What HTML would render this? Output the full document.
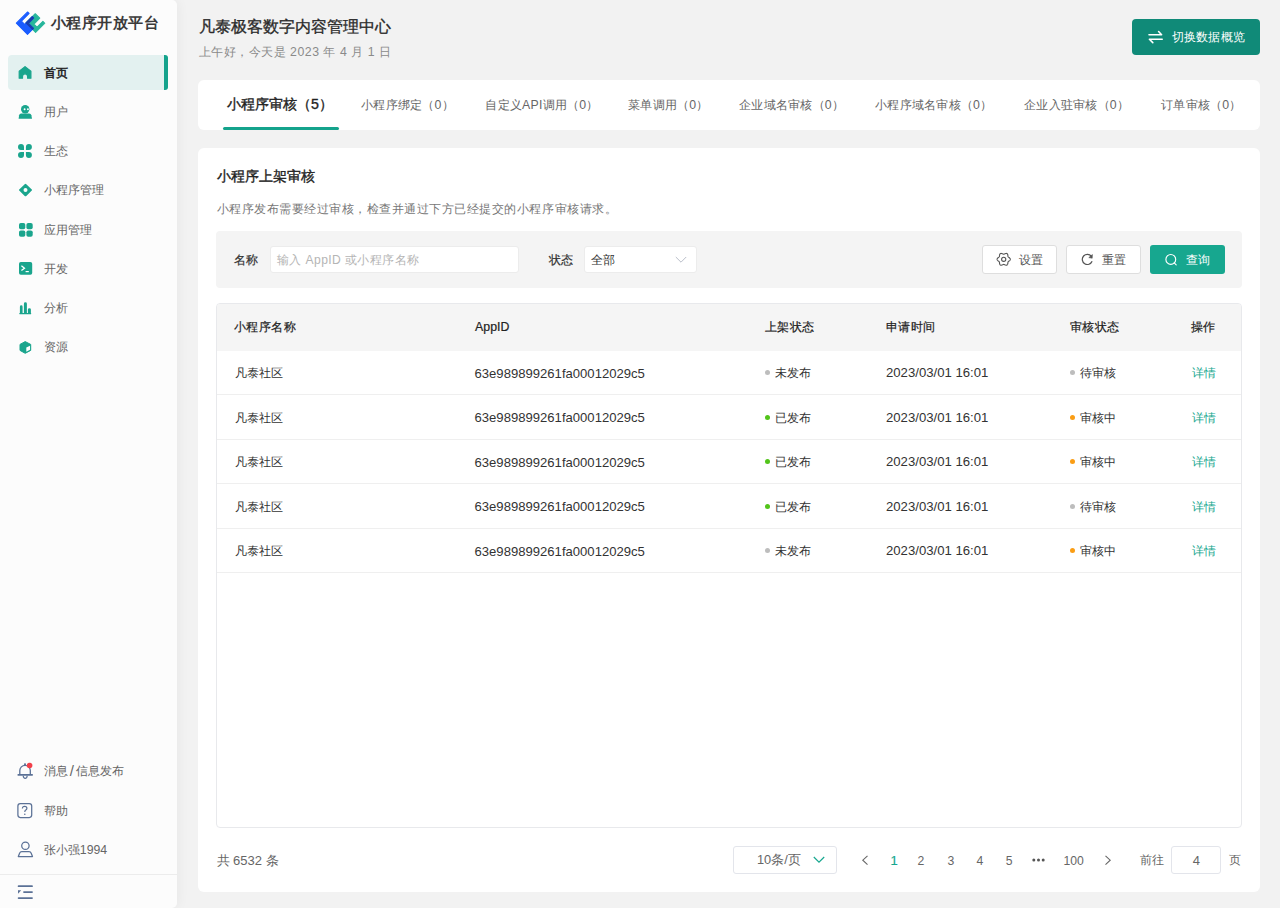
<!DOCTYPE html>
<html><head><meta charset="utf-8">
<style>
*{box-sizing:border-box;margin:0;padding:0}
html,body{width:1280px;height:908px;overflow:hidden}
body{background:#f2f2f2;font-family:"Liberation Sans",sans-serif;position:relative}
.a{position:absolute}
.t{position:absolute;white-space:nowrap;height:20px;line-height:20px}
</style></head><body>
<div class="a" style="left:0;top:0;width:177px;height:908px;background:#fcfcfc;border-radius:0 5px 5px 0;box-shadow:2px 0 12px rgba(0,0,0,0.045)"></div>
<svg class="a" style="left:0px;top:0px" width="50" height="40" viewBox="0 0 50 40"><g transform="matrix(0.5 0.5 0.5 -0.5 0 0)" stroke-width="1.4" stroke-linejoin="round">
<polygon fill="#27b69b" stroke="#27b69b" points="48.9,3.1 68.1,3.1 68.1,21.6 64.2,21.6 64.2,9.9 58.0,9.9 58.0,21.6 48.9,21.6"/>
<polygon fill="#1a5cff" stroke="#1a5cff" points="39.5,-6.9 61.9,-6.9 61.9,5.1 51.7,5.1 51.7,15.7 48.9,15.7 48.9,0.3 42.6,0.3 42.6,15.7 39.5,15.7"/>
<polygon fill="#1a3fae" stroke="#1a3fae" points="48.9,3.1 61.9,3.1 61.9,5.1 51.7,5.1 51.7,15.7 48.9,15.7"/>
</g></svg>
<div class="t" style="left:50.5px;top:12.60px;font-size:15px;color:#3a3a3a;font-weight:bold;letter-spacing:0.5px">小程序开放平台</div>
<div class="a" style="left:8px;top:55px;width:160px;height:35px;background:#e3f1f0;border-radius:4px"></div>
<div class="a" style="left:164px;top:55px;width:4px;height:35px;background:#14a38c;border-radius:0 3px 3px 0"></div>
<div class="t" style="left:43.5px;top:62.90px;font-size:12.3px;color:#222;-webkit-text-stroke:0.5px #222">首页</div>
<div class="t" style="left:43.5px;top:101.60px;font-size:12.3px;color:#666;">用户</div>
<div class="t" style="left:43.5px;top:141.30px;font-size:12.3px;color:#666;">生态</div>
<div class="t" style="left:43.5px;top:180.10px;font-size:12.3px;color:#666;">小程序管理</div>
<div class="t" style="left:43.5px;top:219.50px;font-size:12.3px;color:#666;">应用管理</div>
<div class="t" style="left:43.5px;top:258.60px;font-size:12.3px;color:#666;">开发</div>
<div class="t" style="left:43.5px;top:298.30px;font-size:12.3px;color:#666;">分析</div>
<div class="t" style="left:43.5px;top:336.90px;font-size:12.3px;color:#666;">资源</div>
<svg class="a" style="left:18px;top:66px" width="14" height="14" viewBox="0 0 14 14"><path fill="#1aa58d" stroke="#1aa58d" stroke-width="1.2" stroke-linejoin="round" d="M7.05 0.6 L12.9 5.2 V12.2 H9.6 V10.4 A2.55 2.55 0 0 0 4.5 10.4 V12.2 H1.2 V5.2 Z"/></svg>
<svg class="a" style="left:18px;top:105px" width="14" height="14" viewBox="0 0 14 14"><circle cx="7.2" cy="4.2" r="4.2" fill="#1aa58d"/><circle cx="6.6" cy="4.2" r="0.95" fill="#fff"/><circle cx="9.9" cy="4.2" r="0.95" fill="#fff"/><path fill="#1aa58d" d="M3.2 8.5 H11.2 Q13 8.5 13.4 10.3 L14 13.8 H0.6 L1.1 10.3 Q1.4 8.5 3.2 8.5Z"/></svg>
<svg class="a" style="left:18px;top:144px" width="14" height="14" viewBox="0 0 14 14"><path fill="#1aa58d" d="M6 6 H3 A3 3 0 1 1 6 3Z M7.9 6 V3 A3 3 0 1 1 10.9 6Z M6 7.9 V10.9 A3 3 0 1 1 3 7.9Z M7.9 7.9 H10.9 A3 3 0 1 1 7.9 10.9Z"/></svg>
<svg class="a" style="left:18px;top:183px" width="15" height="15" viewBox="0 0 15 15"><path fill="#1aa58d" fill-rule="evenodd" d="M7.5 0.8 Q7.9 0.8 8.3 1.2 L13.8 6.6 Q14.3 7.1 13.8 7.6 L8.3 13 Q7.5 13.7 6.7 13 L1.2 7.6 Q0.7 7.1 1.2 6.6 L6.7 1.2 Q7.1 0.8 7.5 0.8Z M7.5 5.1 A2 2 0 1 0 7.5 9.1 A2 2 0 1 0 7.5 5.1Z"/></svg>
<svg class="a" style="left:19px;top:223px" width="14" height="14" viewBox="0 0 14 14"><rect x="0" y="0" width="6.3" height="6.3" rx="1.8" fill="#1aa58d"/><rect x="0" y="7.4" width="6.3" height="6.3" rx="1.8" fill="#1aa58d"/><rect x="7.4" y="0" width="6.3" height="6.3" rx="1.8" fill="#1aa58d"/><rect x="7.4" y="7.4" width="6.3" height="6.3" rx="1.8" fill="#1aa58d"/></svg>
<svg class="a" style="left:19px;top:262px" width="14" height="14" viewBox="0 0 14 14"><rect x="0" y="0" width="13.2" height="12.8" rx="1.8" fill="#1aa58d"/><path d="M2.4 3.8 L5.5 6.2 L2.4 8.6" stroke="#fff" stroke-width="1.3" fill="none"/><rect x="6.6" y="9" width="3.2" height="1.2" fill="#fff"/></svg>
<svg class="a" style="left:19px;top:302px" width="14" height="14" viewBox="0 0 14 14"><path fill="#1aa58d" d="M0.9 4.7 Q0.9 3.3 2.25 3.3 Q3.6 3.3 3.6 4.7 V11.4 H0.9Z M4.9 1.7 Q4.9 0.3 6.4 0.3 Q7.9 0.3 7.9 1.7 V11.4 H4.9Z M8.9 7.6 Q8.9 6.2 10.4 6.2 Q11.9 6.2 11.9 7.6 V11.4 H8.9Z"/><rect x="0.3" y="10.9" width="11.9" height="1.3" rx="0.4" fill="#1aa58d"/></svg>
<svg class="a" style="left:19px;top:341px" width="14" height="14" viewBox="0 0 14 14"><path fill="#1aa58d" stroke="#1aa58d" stroke-width="1" stroke-linejoin="round" d="M6.2 0.6 L11.7 3.4 V9.4 L6.2 12.3 L1 9.4 V3.4Z"/><path fill="#fff" d="M7.3 6.6 L11 4.7 V8.7 L7.3 10.7Z"/></svg>
<div class="t" style="left:43.8px;top:761.20px;font-size:12.3px;color:#666;">消息<span style="padding:0 1.9px;font-size:15px;vertical-align:-1px">/</span>信息发布</div>
<div class="t" style="left:43.8px;top:800.60px;font-size:12.3px;color:#666;">帮助</div>
<div class="t" style="left:43.8px;top:839.70px;font-size:12.3px;color:#666;">张小强1994</div>
<svg class="a" style="left:17px;top:762px" width="17" height="18" viewBox="0 0 17 18"><path d="M2.8 12.9 V8.6 A5.25 5.25 0 0 1 13.3 8.6 V12.9" fill="none" stroke="#5b7196" stroke-width="1.3"/><path d="M1.2 12.9 H15.2" stroke="#5b7196" stroke-width="1.6" stroke-linecap="round"/><circle cx="8" cy="2.3" r="1.1" fill="#5b7196"/><path d="M6.2 13.8 Q6.4 16.4 8.2 16.4 Q10 16.4 10.2 13.8" fill="none" stroke="#5b7196" stroke-width="1.2"/><circle cx="12.6" cy="3.5" r="2.8" fill="#f2404a"/></svg>
<svg class="a" style="left:16px;top:802px" width="17" height="17" viewBox="0 0 17 17"><rect x="1.9" y="1.6" width="13.8" height="13.9" rx="2.4" fill="none" stroke="#5b7196" stroke-width="1.25"/><path d="M6.4 6.6 Q6.4 4.3 8.7 4.3 Q10.9 4.3 10.9 6.3 Q10.9 7.6 9.5 8.3 Q8.8 8.7 8.8 10.1" fill="none" stroke="#5b7196" stroke-width="1.2"/><circle cx="8.8" cy="12.3" r="0.8" fill="#5b7196"/></svg>
<svg class="a" style="left:17px;top:841px" width="17" height="18" viewBox="0 0 17 18"><circle cx="8.4" cy="4.7" r="3.7" fill="none" stroke="#5b7196" stroke-width="1.25"/><path d="M1.3 15.5 L2.6 12.2 Q3.2 10.6 4.8 10.6 H12 Q13.6 10.6 14.2 12.2 L15.5 15.5 Z" fill="none" stroke="#5b7196" stroke-width="1.25" stroke-linejoin="round"/></svg>
<div class="a" style="left:0px;top:874px;width:177px;height:1px;background:#ececec;"></div>
<svg class="a" style="left:17px;top:885px" width="17" height="15" viewBox="0 0 17 15"><rect x="0.7" y="0.3" width="15.2" height="1.8" rx="0.9" fill="#5b7196"/><rect x="6.1" y="6.2" width="9.8" height="1.8" rx="0.9" fill="#5b7196"/><rect x="0.7" y="12.2" width="15.2" height="1.8" rx="0.9" fill="#5b7196"/><path d="M1 5.2 L4.2 5.2 L1 8.8Z" fill="#5b7196"/></svg>
<div class="t" style="left:198.5px;top:16.90px;font-size:15.8px;color:#2a2a2a;-webkit-text-stroke:0.32px #2a2a2a">凡泰极客数字内容管理中心</div>
<div class="t" style="left:198.5px;top:42.30px;font-size:12.3px;color:#8a8a8a;letter-spacing:0.52px">上午好，今天是 2023 年 4 月 1 日</div>
<div class="a" style="left:1132px;top:19px;width:128px;height:36px;background:#108a78;border-radius:4px"></div>
<svg class="a" style="left:1148px;top:30px" width="16" height="14" viewBox="0 0 16 14"><path d="M1 4.7 H13.6 L10.6 1.5 M14.2 9.2 H1.4 L4.8 12.6" fill="none" stroke="#fff" stroke-width="1.6" stroke-linejoin="round" stroke-linecap="round"/></svg>
<div class="t" style="left:1171.5px;top:27.20px;font-size:11.8px;color:#fff;letter-spacing:0.3px">切换数据概览</div>
<div class="a" style="left:198px;top:80px;width:1062px;height:50px;background:#fff;border-radius:6px"></div>
<div class="t" style="left:227px;top:94.40px;font-size:14.2px;color:#222;-webkit-text-stroke:0.35px #222;">小程序审核（5）</div>
<div class="a" style="left:223px;top:127px;width:116px;height:3px;background:#14a38c;border-radius:2px"></div>
<div class="t" style="left:361px;top:94.90px;font-size:12.3px;color:#666;letter-spacing:0.25px">小程序绑定（0）</div>
<div class="t" style="left:485.3px;top:94.90px;font-size:12.3px;color:#666;letter-spacing:0.25px">自定义API调用（0）</div>
<div class="t" style="left:628.1px;top:94.90px;font-size:12.3px;color:#666;letter-spacing:0.25px">菜单调用（0）</div>
<div class="t" style="left:739px;top:94.90px;font-size:12.3px;color:#666;letter-spacing:0.25px">企业域名审核（0）</div>
<div class="t" style="left:875px;top:94.90px;font-size:12.3px;color:#666;letter-spacing:0.25px">小程序域名审核（0）</div>
<div class="t" style="left:1024px;top:94.90px;font-size:12.3px;color:#666;letter-spacing:0.25px">企业入驻审核（0）</div>
<div class="t" style="left:1161px;top:94.90px;font-size:12.3px;color:#666;letter-spacing:0.25px">订单审核（0）</div>
<div class="a" style="left:198px;top:148px;width:1062px;height:744px;background:#fff;border-radius:6px"></div>
<div class="t" style="left:216.5px;top:166.00px;font-size:14.2px;color:#222;-webkit-text-stroke:0.35px #222;">小程序上架审核</div>
<div class="t" style="left:216.5px;top:199.00px;font-size:12.05px;color:#777;letter-spacing:0.52px">小程序发布需要经过审核，检查并通过下方已经提交的小程序审核请求。</div>
<div class="a" style="left:216px;top:231px;width:1026px;height:57px;background:#f4f4f4;border-radius:4px"></div>
<div class="t" style="left:234px;top:250.00px;font-size:12.3px;color:#333;-webkit-text-stroke:0.2px #333;">名称</div>
<div class="a" style="left:270px;top:246px;width:249px;height:27px;background:#fff;border:1px solid #ececec;border-radius:3px;box-sizing:border-box"></div>
<div class="t" style="left:277px;top:249.80px;font-size:12.1px;color:#b5b5b5;letter-spacing:0.4px">输入 AppID 或小程序名称</div>
<div class="t" style="left:548.8px;top:249.60px;font-size:12.3px;color:#333;-webkit-text-stroke:0.2px #333;">状态</div>
<div class="a" style="left:584px;top:246px;width:113px;height:27px;background:#fff;border:1px solid #ececec;border-radius:3px;box-sizing:border-box"></div>
<div class="t" style="left:590.5px;top:250.00px;font-size:12.3px;color:#333;">全部</div>
<svg class="a" style="left:675px;top:256px" width="12" height="8" viewBox="0 0 12 8"><path d="M0.8 1 L6 6.2 L11.2 1" fill="none" stroke="#b9bec9" stroke-width="1"/></svg>
<div class="a" style="left:982px;top:245px;width:75px;height:29px;background:#fff;border:1px solid #dedede;border-radius:3px;box-sizing:border-box"></div>
<svg class="a" style="left:995px;top:252px" width="17" height="15" viewBox="0 0 17 15"><path d="M15.30 7.30 L15.25 6.96 L15.12 6.63 L14.91 6.32 L14.65 6.04 L14.35 5.79 L14.04 5.56 L13.75 5.36 L13.49 5.17 L13.28 4.97 L13.12 4.75 L13.01 4.50 L12.94 4.22 L12.90 3.90 L12.88 3.54 L12.84 3.16 L12.77 2.78 L12.66 2.41 L12.50 2.08 L12.27 1.80 L12.00 1.58 L11.68 1.45 L11.33 1.40 L10.95 1.43 L10.58 1.52 L10.21 1.65 L9.87 1.80 L9.55 1.96 L9.25 2.09 L8.97 2.17 L8.70 2.20 L8.43 2.17 L8.15 2.09 L7.85 1.96 L7.53 1.80 L7.19 1.65 L6.82 1.52 L6.45 1.43 L6.07 1.40 L5.72 1.45 L5.40 1.58 L5.13 1.80 L4.90 2.08 L4.74 2.41 L4.63 2.78 L4.56 3.16 L4.52 3.54 L4.50 3.90 L4.46 4.22 L4.39 4.50 L4.28 4.75 L4.12 4.97 L3.91 5.17 L3.65 5.36 L3.36 5.56 L3.05 5.79 L2.75 6.04 L2.49 6.32 L2.28 6.63 L2.15 6.96 L2.10 7.30 L2.15 7.64 L2.28 7.97 L2.49 8.28 L2.75 8.56 L3.05 8.81 L3.36 9.04 L3.65 9.24 L3.91 9.43 L4.12 9.63 L4.28 9.85 L4.39 10.10 L4.46 10.38 L4.50 10.70 L4.52 11.06 L4.56 11.44 L4.63 11.82 L4.74 12.19 L4.90 12.52 L5.13 12.80 L5.40 13.02 L5.72 13.15 L6.07 13.20 L6.45 13.17 L6.82 13.08 L7.19 12.95 L7.53 12.80 L7.85 12.64 L8.15 12.51 L8.43 12.43 L8.70 12.40 L8.97 12.43 L9.25 12.51 L9.55 12.64 L9.87 12.80 L10.21 12.95 L10.58 13.08 L10.95 13.17 L11.33 13.20 L11.68 13.15 L12.00 13.02 L12.27 12.80 L12.50 12.52 L12.66 12.19 L12.77 11.82 L12.84 11.44 L12.88 11.06 L12.90 10.70 L12.94 10.38 L13.01 10.10 L13.12 9.85 L13.28 9.63 L13.49 9.43 L13.75 9.24 L14.04 9.04 L14.35 8.81 L14.65 8.56 L14.91 8.28 L15.12 7.97 L15.25 7.64 L15.30 7.30Z" fill="none" stroke="#555" stroke-width="1.1" stroke-linejoin="round"/><circle cx="8.7" cy="7.3" r="2.1" fill="none" stroke="#555" stroke-width="1.1"/></svg>
<div class="t" style="left:1019px;top:250.00px;font-size:12.3px;color:#555;">设置</div>
<div class="a" style="left:1066px;top:245px;width:75px;height:29px;background:#fff;border:1px solid #dedede;border-radius:3px;box-sizing:border-box"></div>
<svg class="a" style="left:1080px;top:252px" width="15" height="15" viewBox="0 0 15 15"><path d="M12.13 9.31 A5.1 5.1 0 1 1 11.42 4.26" fill="none" stroke="#555" stroke-width="1.2"/><path d="M12.4 2.6 L12.2 6.2 L8.8 5.6Z" fill="#555" stroke="#555" stroke-width="0.6" stroke-linejoin="round"/></svg>
<div class="t" style="left:1102px;top:250.00px;font-size:12.3px;color:#555;">重置</div>
<div class="a" style="left:1150px;top:245px;width:75px;height:29px;background:#17a78f;border-radius:3px"></div>
<svg class="a" style="left:1164px;top:252px" width="15" height="15" viewBox="0 0 15 15"><circle cx="6.8" cy="7.4" r="4.9" fill="none" stroke="#fff" stroke-width="1.15"/><path d="M10.2 10.8 L12.2 12.8" stroke="#fff" stroke-width="1.15" stroke-linecap="round"/></svg>
<div class="t" style="left:1185.5px;top:250.00px;font-size:12.3px;color:#fff;">查询</div>
<div class="a" style="left:216px;top:303px;width:1026px;height:525px;border:1px solid #e8e9ec;border-radius:4px;overflow:hidden;box-sizing:border-box"><div style="height:47px;background:#f5f5f5"></div></div>
<div class="t" style="left:234px;top:317.10px;font-size:12.3px;color:#222;-webkit-text-stroke:0.2px #222;letter-spacing:0.4px">小程序名称</div>
<div class="t" style="left:475.1px;top:317.00px;font-size:12.3px;color:#222;-webkit-text-stroke:0.2px #222;">AppID</div>
<div class="t" style="left:765px;top:317.10px;font-size:12.3px;color:#222;-webkit-text-stroke:0.2px #222;letter-spacing:0.4px">上架状态</div>
<div class="t" style="left:886px;top:317.10px;font-size:12.3px;color:#222;-webkit-text-stroke:0.2px #222;letter-spacing:0.4px">申请时间</div>
<div class="t" style="left:1070px;top:317.10px;font-size:12.3px;color:#222;-webkit-text-stroke:0.2px #222;letter-spacing:0.4px">审核状态</div>
<div class="t" style="left:1191px;top:317.10px;font-size:12.3px;color:#222;-webkit-text-stroke:0.2px #222;letter-spacing:0.4px">操作</div>
<div class="t" style="left:234.5px;top:363.10px;font-size:12.3px;color:#333;">凡泰社区</div>
<div class="t" style="left:474.5px;top:363.60px;font-size:13.1px;color:#333;">63e989899261fa00012029c5</div>
<div class="a" style="left:765px;top:370.40000000000003px;width:5px;height:5px;background:#bdbdbd;border-radius:50%"></div>
<div class="t" style="left:775px;top:363.10px;font-size:12.3px;color:#333;">未发布</div>
<div class="t" style="left:886px;top:363.10px;font-size:13.15px;color:#333;">2023/03/01 16:01</div>
<div class="a" style="left:1070px;top:370.40000000000003px;width:5px;height:5px;background:#bdbdbd;border-radius:50%"></div>
<div class="t" style="left:1080px;top:363.10px;font-size:12.3px;color:#333;">待审核</div>
<div class="t" style="left:1191.5px;top:363.10px;font-size:12.3px;color:#17a78f;">详情</div>
<div class="a" style="left:217px;top:394px;width:1024px;height:1px;background:#efefef;"></div>
<div class="t" style="left:234.5px;top:407.60px;font-size:12.3px;color:#333;">凡泰社区</div>
<div class="t" style="left:474.5px;top:408.10px;font-size:13.1px;color:#333;">63e989899261fa00012029c5</div>
<div class="a" style="left:765px;top:414.90000000000003px;width:5px;height:5px;background:#52c41a;border-radius:50%"></div>
<div class="t" style="left:775px;top:407.60px;font-size:12.3px;color:#333;">已发布</div>
<div class="t" style="left:886px;top:407.60px;font-size:13.15px;color:#333;">2023/03/01 16:01</div>
<div class="a" style="left:1070px;top:414.90000000000003px;width:5px;height:5px;background:#fa9d14;border-radius:50%"></div>
<div class="t" style="left:1080px;top:407.60px;font-size:12.3px;color:#333;">审核中</div>
<div class="t" style="left:1191.5px;top:407.60px;font-size:12.3px;color:#17a78f;">详情</div>
<div class="a" style="left:217px;top:439px;width:1024px;height:1px;background:#efefef;"></div>
<div class="t" style="left:234.5px;top:452.10px;font-size:12.3px;color:#333;">凡泰社区</div>
<div class="t" style="left:474.5px;top:452.60px;font-size:13.1px;color:#333;">63e989899261fa00012029c5</div>
<div class="a" style="left:765px;top:459.40000000000003px;width:5px;height:5px;background:#52c41a;border-radius:50%"></div>
<div class="t" style="left:775px;top:452.10px;font-size:12.3px;color:#333;">已发布</div>
<div class="t" style="left:886px;top:452.10px;font-size:13.15px;color:#333;">2023/03/01 16:01</div>
<div class="a" style="left:1070px;top:459.40000000000003px;width:5px;height:5px;background:#fa9d14;border-radius:50%"></div>
<div class="t" style="left:1080px;top:452.10px;font-size:12.3px;color:#333;">审核中</div>
<div class="t" style="left:1191.5px;top:452.10px;font-size:12.3px;color:#17a78f;">详情</div>
<div class="a" style="left:217px;top:483px;width:1024px;height:1px;background:#efefef;"></div>
<div class="t" style="left:234.5px;top:496.60px;font-size:12.3px;color:#333;">凡泰社区</div>
<div class="t" style="left:474.5px;top:497.10px;font-size:13.1px;color:#333;">63e989899261fa00012029c5</div>
<div class="a" style="left:765px;top:503.90000000000003px;width:5px;height:5px;background:#52c41a;border-radius:50%"></div>
<div class="t" style="left:775px;top:496.60px;font-size:12.3px;color:#333;">已发布</div>
<div class="t" style="left:886px;top:496.60px;font-size:13.15px;color:#333;">2023/03/01 16:01</div>
<div class="a" style="left:1070px;top:503.90000000000003px;width:5px;height:5px;background:#bdbdbd;border-radius:50%"></div>
<div class="t" style="left:1080px;top:496.60px;font-size:12.3px;color:#333;">待审核</div>
<div class="t" style="left:1191.5px;top:496.60px;font-size:12.3px;color:#17a78f;">详情</div>
<div class="a" style="left:217px;top:528px;width:1024px;height:1px;background:#efefef;"></div>
<div class="t" style="left:234.5px;top:541.10px;font-size:12.3px;color:#333;">凡泰社区</div>
<div class="t" style="left:474.5px;top:541.60px;font-size:13.1px;color:#333;">63e989899261fa00012029c5</div>
<div class="a" style="left:765px;top:548.4px;width:5px;height:5px;background:#bdbdbd;border-radius:50%"></div>
<div class="t" style="left:775px;top:541.10px;font-size:12.3px;color:#333;">未发布</div>
<div class="t" style="left:886px;top:541.10px;font-size:13.15px;color:#333;">2023/03/01 16:01</div>
<div class="a" style="left:1070px;top:548.4px;width:5px;height:5px;background:#fa9d14;border-radius:50%"></div>
<div class="t" style="left:1080px;top:541.10px;font-size:12.3px;color:#333;">审核中</div>
<div class="t" style="left:1191.5px;top:541.10px;font-size:12.3px;color:#17a78f;">详情</div>
<div class="a" style="left:217px;top:572px;width:1024px;height:1px;background:#efefef;"></div>
<div class="t" style="left:216.5px;top:850.90px;font-size:13px;color:#666;">共 6532 条</div>
<div class="a" style="left:733px;top:846px;width:104px;height:28px;background:#fff;border:1px solid #e3e5eb;border-radius:3px;box-sizing:border-box"></div>
<div class="t" style="left:757px;top:850.00px;font-size:12.8px;color:#666;">10条/页</div>
<svg class="a" style="left:813px;top:856px" width="12" height="8" viewBox="0 0 12 8"><path d="M0.8 1 L6 6.2 L11.2 1" fill="none" stroke="#17a78f" stroke-width="1.2"/></svg>
<svg class="a" style="left:861px;top:855px" width="8" height="11" viewBox="0 0 8 11"><path d="M6.5 0.8 L1.8 5.2 L6.5 9.6" fill="none" stroke="#666" stroke-width="1.1"/></svg>
<div class="t" style="left:890.5px;top:850.50px;font-size:13px;color:#17a78f;-webkit-text-stroke:0.2px #17a78f;">1</div>
<div class="t" style="left:917.5px;top:850.50px;font-size:12.2px;color:#666;">2</div>
<div class="t" style="left:947.5px;top:850.50px;font-size:12.2px;color:#666;">3</div>
<div class="t" style="left:976.5px;top:850.50px;font-size:12.2px;color:#666;">4</div>
<div class="t" style="left:1005.8px;top:850.50px;font-size:12.2px;color:#666;">5</div>
<div class="t" style="left:1063.5px;top:850.50px;font-size:12.2px;color:#666;">100</div>
<svg class="a" style="left:1032px;top:858px" width="13" height="4" viewBox="0 0 13 4"><circle cx="1.8" cy="2" r="1.5" fill="#555"/><circle cx="6.5" cy="2" r="1.5" fill="#555"/><circle cx="11.2" cy="2" r="1.5" fill="#555"/></svg>
<svg class="a" style="left:1104px;top:855px" width="8" height="11" viewBox="0 0 8 11"><path d="M1.5 0.8 L6.2 5.2 L1.5 9.6" fill="none" stroke="#666" stroke-width="1.1"/></svg>
<div class="t" style="left:1139.5px;top:850.30px;font-size:12.3px;color:#666;">前往</div>
<div class="a" style="left:1171px;top:846px;width:50px;height:28px;background:#fff;border:1px solid #e3e5eb;border-radius:3px;box-sizing:border-box"></div>
<div class="t" style="left:1192.8px;top:850.50px;font-size:13px;color:#666;">4</div>
<div class="t" style="left:1228.5px;top:850.30px;font-size:12.3px;color:#666;">页</div>
</body></html>
